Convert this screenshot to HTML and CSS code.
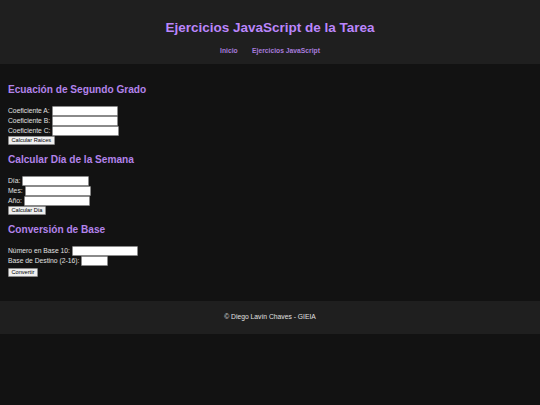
FILE: index.html
```html
<!DOCTYPE html>
<html lang="es">
<head>
<meta charset="utf-8">
<title>Ejercicios JavaScript de la Tarea</title>
<link rel="stylesheet" href="styles.css">
</head>
<body>
<header class="site-header">
  <h1 class="site-title">Ejercicios JavaScript de la Tarea</h1>
  <nav class="site-nav">
    <ul class="nav-list">
      <li><a class="nav-link" href="#">Inicio</a></li>
      <li><a class="nav-link" href="#">Ejercicios JavaScript</a></li>
    </ul>
  </nav>
</header>
<main class="content">
  <section class="exercise">
    <h2 class="exercise-title">Ecuación de Segundo Grado</h2>
    <div class="row"><label class="field-label">Coeficiente A:</label><input class="field" type="text"></div>
    <div class="row"><label class="field-label">Coeficiente B:</label><input class="field" type="text"></div>
    <div class="row"><label class="field-label">Coeficiente C:</label><input class="field" type="text"></div>
    <button class="action" type="button">Calcular Raíces</button>
  </section>
  <section class="exercise">
    <h2 class="exercise-title">Calcular Día de la Semana</h2>
    <div class="row"><label class="field-label">Día:</label><input class="field" type="text"></div>
    <div class="row"><label class="field-label">Mes:</label><input class="field" type="text"></div>
    <div class="row"><label class="field-label">Año:</label><input class="field" type="text"></div>
    <button class="action" type="button">Calcular Día</button>
  </section>
  <section class="exercise">
    <h2 class="exercise-title">Conversión de Base</h2>
    <div class="row"><label class="field-label">Número en Base 10:</label><input class="field" type="text"></div>
    <div class="row"><label class="field-label">Base de Destino (2-16):</label><input class="field field-small" type="text"></div>
    <button class="action action-spaced" type="button">Convertir</button>
  </section>
</main>
<footer class="site-footer">
  <p class="footer-text">© Diego Lavín Chaves - GIEIA</p>
</footer>
</body>
</html>
```

FILE: styles.css
```css
html {
  background: #121212;
}

body {
  margin: 0;
  background: #121212;
  color: #e0e0e0;
  font-family: "Liberation Sans", Arial, sans-serif;
  font-size: 6.75px;
  line-height: 7.8px;
}

.site-header {
  background: #1f1f1f;
  text-align: center;
  padding: 20px 0 11px;
  height: 33px;
}

.site-title {
  margin: 0;
  font-size: 13.5px;
  font-weight: bold;
  color: #bb86fc;
  line-height: 15.5px;
}

.site-nav {
  margin-top: 11.5px;
}

.nav-list {
  list-style: none;
  margin: 0;
  padding: 0;
  display: flex;
  justify-content: center;
  gap: 1.7px;
  line-height: 7.8px;
}

.nav-link {
  display: inline-block;
  margin: 0 6.33px;
  color: #a77cdc;
  font-weight: bold;
  text-decoration: none;
}

.content {
  padding: 11px 8px 10px;
}

.exercise-title {
  margin: 9.2px 0 10.3px;
  font-size: 10.125px;
  font-weight: bold;
  color: #b283ea;
  line-height: 11.6px;
}

.exercise:first-child .exercise-title {
  margin-top: 9px;
}

.row {
  display: flex;
  align-items: center;
  gap: 1.9px;
  height: 10px;
}

.field-label {
  line-height: 7.8px;
}

.field {
  box-sizing: border-box;
  width: 66.3px;
  height: 9.4px;
  margin: 0;
  padding: 0 1px;
  border: 1px solid #8a8a8a;
  border-radius: 1px;
  font: 5.625px "Liberation Sans", Arial, sans-serif;
  background: #ffffff;
  color: #000000;
}

.field-small {
  width: 27px;
}

.action {
  display: block;
  box-sizing: border-box;
  margin: 0;
  height: 9px;
  padding: 0 2.5px;
  border: 1px solid #8a8a8a;
  border-radius: 1px;
  background: #efefef;
  color: #000000;
  font: 5.625px "Liberation Sans", Arial, sans-serif;
  line-height: 7px;
}

.action-spaced {
  margin-top: 2px;
}

.site-footer {
  background: #1f1f1f;
  margin-top: 13.6px;
  padding: 12.6px 0;
  text-align: center;
}

.footer-text {
  margin: 0;
  color: #e0e0e0;
  line-height: 7.8px;
}
```
